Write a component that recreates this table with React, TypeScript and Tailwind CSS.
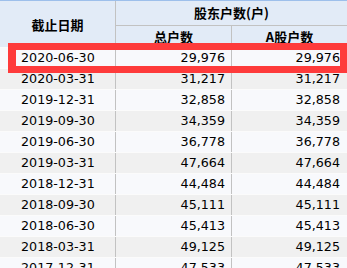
const rows = [
  ["2020-06-30", "29,976", "29,976"],
  ["2020-03-31", "31,217", "31,217"],
  ["2019-12-31", "32,858", "32,858"],
  ["2019-09-30", "34,359", "34,359"],
  ["2019-06-30", "36,778", "36,778"],
  ["2019-03-31", "47,664", "47,664"],
  ["2018-12-31", "44,484", "44,484"],
  ["2018-09-30", "45,111", "45,111"],
  ["2018-06-30", "45,413", "45,413"],
  ["2018-03-31", "49,125", "49,125"],
  ["2017-12-31", "47,533", "47,533"],
];

const App = () => {
  return (
    <div className="relative w-[347px] h-[268px] overflow-hidden bg-white">
      {/* header */}
      <div className="grid grid-cols-[116px_116px_115px] grid-rows-[25px_21px] bg-[#e2ebf7] border-t border-[#9dbfeb] font-['Noto_Sans_CJK_SC',sans-serif] font-bold text-[13px] text-black">
        <div className="row-span-2 flex items-center justify-center border-r border-[#c2c2c2] pt-[2px]">
          截止日期
        </div>
        <div className="col-span-2 flex items-center justify-center border-b border-[#c2c2c2]">
          股东户数(户)
        </div>
        <div className="flex items-center justify-center border-r border-[#c2c2c2]">总户数</div>
        <div className="flex items-center justify-center">A股户数</div>
      </div>

      {/* rows */}
      <div className="font-['DejaVu_Sans',sans-serif] text-[12.7px] text-black">
        {rows.map((r, i) => (
          <div
            key={r[0]}
            className={
              "grid grid-cols-[116px_116px_115px] h-[21px] border-t border-[#fbfbfb] " +
              (i % 2 === 0 ? "bg-[#f8f9fc]" : "bg-[#f0f0f0]")
            }
          >
            <div className="flex items-center pl-[21px] border-r border-[#c2c2c2]">{r[0]}</div>
            <div className="flex items-center justify-end pr-[6px] border-r border-[#c2c2c2]">{r[1]}</div>
            <div className="flex items-center justify-end pr-[7px]">{r[2]}</div>
          </div>
        ))}
      </div>

      {/* highlight box */}
      <div className="absolute left-[8px] top-[43px] w-[339px] h-[30px] border-[7px] border-l-8 border-[#fe3b3b]" />
    </div>
  );
};

export default App;
